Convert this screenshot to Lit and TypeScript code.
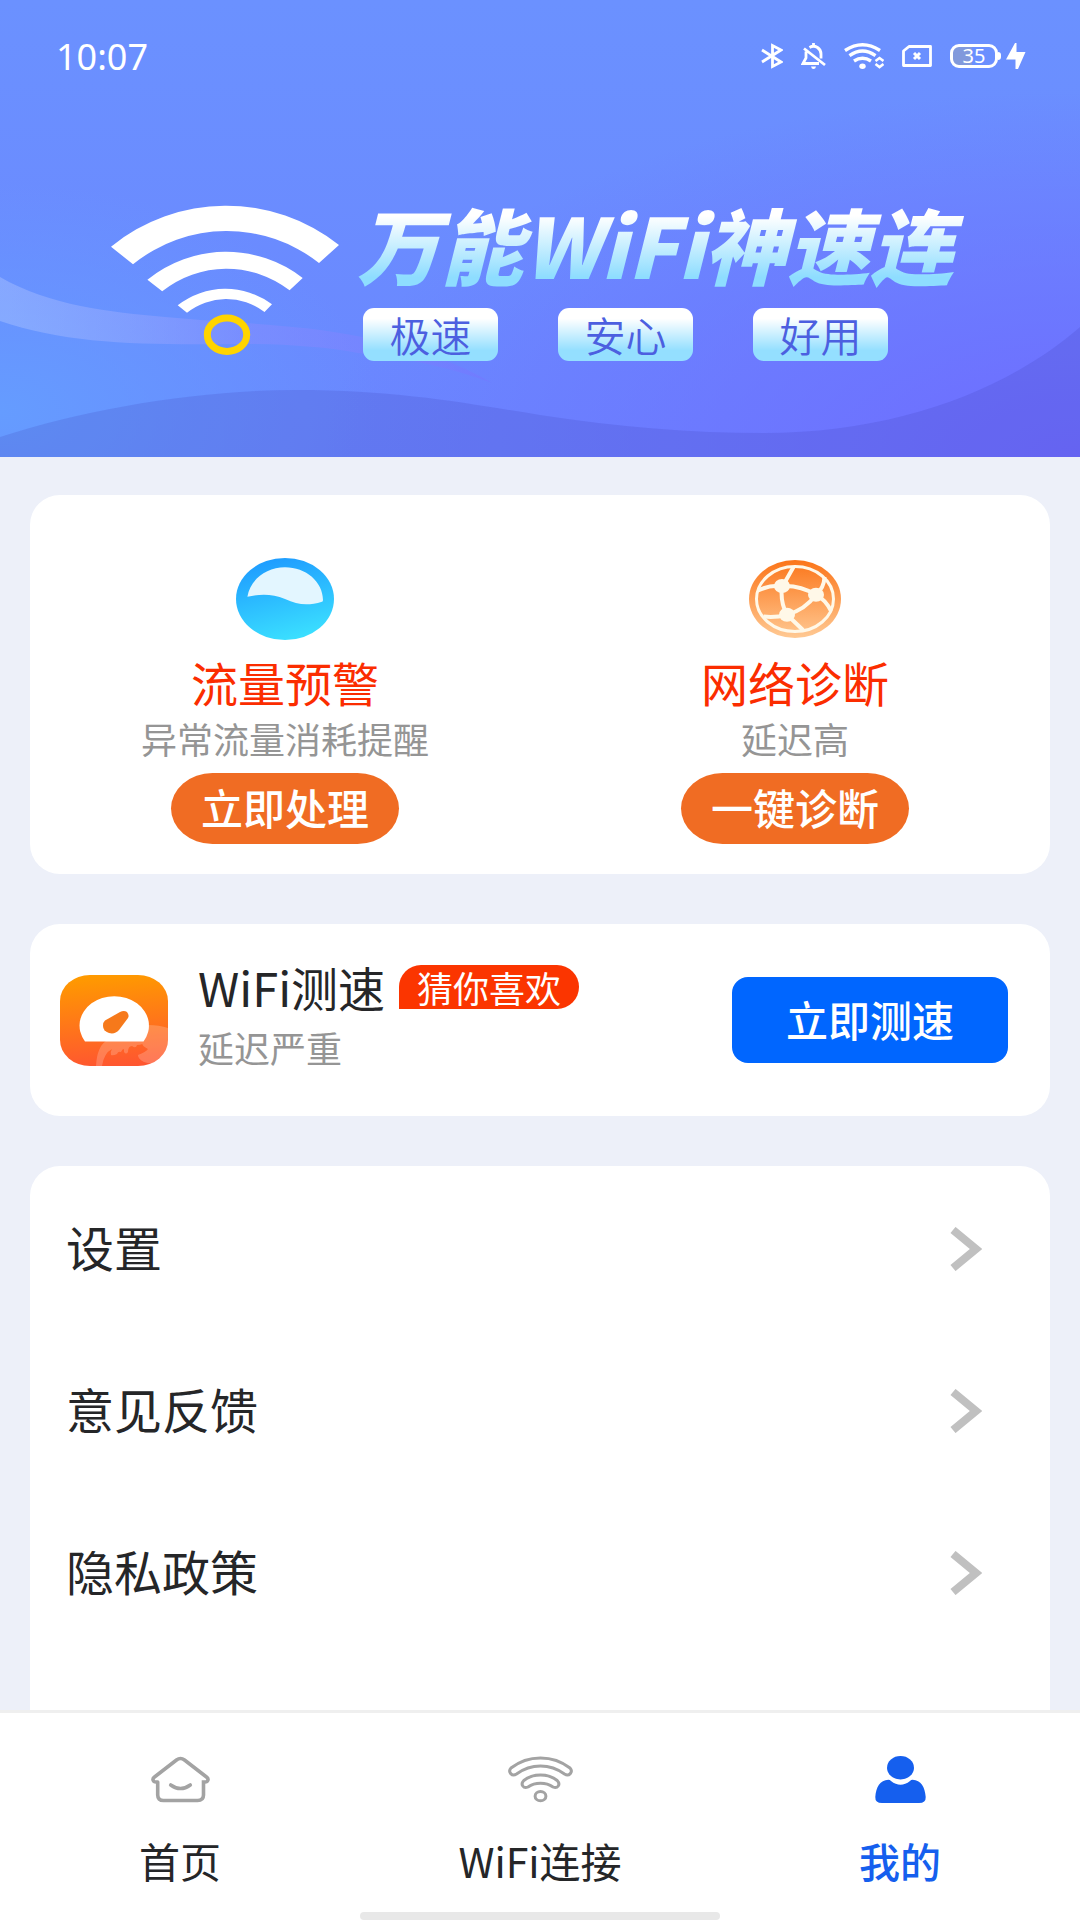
import { LitElement, html, css, TemplateResult } from "lit";
import { customElement, property, state } from "lit/decorators.js";
import { classMap } from "lit/directives/class-map.js";

interface Tool {
    icon: TemplateResult;
    title: string;
    note: string;
    action: string;
}

interface Tab {
    id: string;
    label: string;
    icon: TemplateResult;
}

const waterIcon = html`
    <svg width="98" height="82" viewBox="0 0 98 82" aria-hidden="true">
        <defs>
            <linearGradient id="water" x1="0.3" y1="0" x2="0.6" y2="1">
                <stop offset="0" stop-color="#1e9bff" />
                <stop offset="1" stop-color="#3be0ff" />
            </linearGradient>
        </defs>
        <ellipse cx="49" cy="41" rx="49" ry="41" fill="url(#water)" />
        <path fill="#e3f6ff" d="M11.4 38.7C14 22 30 9.3 49 9.3C70 9.3 87 24 87 42Q87 43.5 86 43.7C72 48 62 47 49 41C36 35.5 24 36 11.4 38.7Z" />
    </svg>
`;

const networkIcon = html`
    <svg width="92" height="78" viewBox="0 0 92 78" aria-hidden="true">
        <defs>
            <linearGradient id="net" x1="0" y1="0" x2="0" y2="1">
                <stop offset="0" stop-color="#fb7519" />
                <stop offset="1" stop-color="#ffc993" />
            </linearGradient>
        </defs>
        <ellipse cx="46" cy="39" rx="46" ry="39" fill="url(#net)" />
        <g fill="none" stroke="#fff8e8" stroke-width="3">
            <ellipse cx="46" cy="39" rx="38.5" ry="32.5" />
            <path stroke-width="4" d="M44.5 7L36 22M9 30.5Q20 25 33 26Q51 25 67 34.7M33 26Q31 42 38 54.7M14.5 56.5Q26 58 38 54.7Q56 50 67 34.7M38 54.7L54 70M67 34.7Q75 28 75.5 17M67 34.7Q77 40 82 51" />
        </g>
        <g fill="#fff8e8">
            <ellipse cx="33" cy="26" rx="8" ry="7" />
            <ellipse cx="67" cy="34.7" rx="8" ry="7" />
            <ellipse cx="38" cy="54.7" rx="8" ry="7" />
        </g>
    </svg>
`;

const gaugeIcon = html`
    <svg width="108" height="91" viewBox="0 0 108 91" aria-hidden="true">
        <defs>
            <linearGradient id="gauge" x1="0.45" y1="0" x2="0.55" y2="1">
                <stop offset="0" stop-color="#ff9a00" />
                <stop offset="1" stop-color="#ff5630" />
            </linearGradient>
            <clipPath id="tile"><rect width="108" height="91" rx="30" ry="26" /></clipPath>
        </defs>
        <g clip-path="url(#tile)">
            <rect width="108" height="91" fill="url(#gauge)" />
            <g fill="#fff" opacity="0.2">
                <path d="M88 50Q99 50 108 53V82Q98 92 84 87Q78 84 78 80Q86 77 88 74Q80 70 83 66Z" />
                <path d="M36 91Q37 72 46 66H84Q84 70 77 70Q76 74 72 71Q68 71 68 77Q66 80 64 77V74Q62 74 61 77Q58 76 57 79Q53 81 51 80Q50 77 52 74Q44 78 42 91Z" />
            </g>
            <path fill="#fff" d="M25 66.5A34.7 29.5 0 1 1 83.5 66.5Z" />
            <path fill="#f6791b" d="M45 45.5L60 37Q64 35 67 37Q69.5 40 68 43L59 55Q55 59.5 49 58Q43 56 43 51Q43 47 45 45.5Z" />
        </g>
    </svg>
`;

const homeIcon = html`
    <svg width="59" height="46" viewBox="0 0 59 46" fill="none" stroke="#a3a3a3" stroke-width="3.6" stroke-linecap="round" aria-hidden="true">
        <path d="M6.7 25.5H5C2 25.5 0.8 22.5 3.5 20.5L25.5 3.5Q29.5 0.5 33.5 3.5L55.5 20.5C58.2 22.5 57 25.5 54 25.5H52.5V38.5Q52.5 44 46.5 44H12.5Q6.7 44 6.7 38.5V25.5" />
        <path d="M19.7 28.5Q29.5 35.5 39.3 28.5" />
    </svg>
`;

const wifiIcon = html`
    <svg width="65" height="46" viewBox="0 0 65 46" fill="none" stroke="#a3a3a3" stroke-width="3" aria-hidden="true">
        <path d="M3 11.5C20 -2 45 -2 62 11.5C65.5 15.5 61 20.5 56.5 17.5C42 6.8 23 6.8 8.5 17.5C4 20.5 -0.5 15.5 3 11.5Z" />
        <path d="M15.8 24C25 16.8 40 16.8 49.2 24C53 28 49.5 32.5 45 30.5C38 25.5 27 25.5 20 30.5C15.5 32.5 12 28 15.8 24Z" />
        <ellipse cx="32.5" cy="39.7" rx="5.4" ry="4.6" />
    </svg>
`;

const personIcon = html`
    <svg width="51" height="47" viewBox="0 0 51 47" fill="#155fee" aria-hidden="true">
        <ellipse cx="25.5" cy="11.7" rx="13.5" ry="11.7" />
        <path d="M13.4 23.7Q15 23.7 16 25Q25.5 32.5 35 25Q36 23.7 37.6 23.7C46 24 50 31 50.7 41Q51 47 44 47H7Q0 47 0.3 41C1 31 5 24 13.4 23.7Z" />
    </svg>
`;

@customElement("status-bar")
export class StatusBar extends LitElement {
    static styles = css`
        :host {
            display: flex;
            align-items: center;
            justify-content: space-between;
            height: 112px;
            padding: 0 54px 0 56px;
            color: #fff;
            font-family: "Noto Sans", sans-serif;
        }

        .time {
            font-size: 36px;
        }

        .icons {
            display: flex;
            align-items: center;
            gap: 18px;
        }

        .power {
            display: flex;
            align-items: center;
            gap: 8px;
        }

        .battery {
            position: relative;
            box-sizing: border-box;
            width: 48px;
            height: 24px;
            border: 3px solid #fff;
            border-radius: 9px;
            background: linear-gradient(90deg, #8199dc 45%, transparent 45%);
            font-size: 20px;
            line-height: 18px;
            text-align: center;
        }

        .battery::after {
            content: "";
            position: absolute;
            top: 5px;
            right: -6px;
            width: 3px;
            height: 8px;
            border-radius: 0 3px 3px 0;
            background: #fff;
        }
    `;

    render() {
        return html`
            <span class="time">10:07</span>
            <div class="icons">
                <svg width="22" height="26" viewBox="0 0 22 26" fill="none" stroke="#fff" stroke-width="2.8" aria-hidden="true">
                    <path d="M1 7L20 19L11.5 23.5V2.5L20 7L1 19" />
                </svg>
                <svg width="25" height="26" viewBox="0 0 25 26" fill="none" stroke="#fff" stroke-width="2.8" aria-hidden="true">
                    <path d="M8.5 4.5Q12.5 2 16.5 4.5Q20 7 20 11V15.5M5 8.5V15L2 20.5H18M3 5.5L24 22M12.5 0V3" />
                    <path stroke="none" fill="#fff" d="M10 23.5H15Q14.5 26 12.5 26Q10.5 26 10 23.5Z" />
                </svg>
                <svg width="40" height="26" viewBox="0 0 40 26" fill="none" stroke="#fff" stroke-width="3.4" aria-hidden="true">
                    <path d="M1 7.5Q18.5 -4 36 7.5M5.5 12.7Q18.5 3.5 31.5 12.7M10 18Q18.5 12.5 27 18" />
                    <ellipse cx="18.5" cy="23.3" rx="3.2" ry="2.7" fill="#fff" stroke="none" />
                    <path stroke-width="2.6" d="M31.5 18L35.5 15L39.5 18M31.5 21L35.5 24L39.5 21" />
                </svg>
                <svg width="30" height="22" viewBox="0 0 30 22" fill="none" stroke="#fff" stroke-width="2.8" aria-hidden="true">
                    <path d="M7 1.5H28.5V20.5H1.5V6Z" stroke-linejoin="round" />
                    <path d="M12 8L18 14M18 8L12 14" stroke-width="3" />
                </svg>
                <div class="power">
                    <span class="battery">35</span>
                    <svg width="20" height="26" viewBox="0 0 20 26" fill="#fff" aria-hidden="true">
                        <path d="M9 0H10.5V9H19.5L12 26H9.5V16.5H0Z" />
                    </svg>
                </div>
            </div>
        `;
    }
}

@customElement("brand-header")
export class BrandHeader extends LitElement {
    @property({ attribute: false }) tags: string[] = [];

    static styles = css`
        :host {
            display: block;
            position: relative;
            background:
                radial-gradient(ellipse 35% 50% at 0 90%, #659cff, transparent),
                radial-gradient(ellipse 70% 80% at 100% 100%, #6e6cff, transparent),
                linear-gradient(#6b91ff, #6a86ff);
        }

        .waves {
            position: absolute;
            inset: 0;
            width: 100%;
            height: 100%;
        }

        .content {
            position: relative;
        }

        .brand {
            display: flex;
            align-items: center;
            gap: 24px;
            padding: 86px 80px 96px 111px;
        }

        .logo {
            flex: none;
        }

        .name {
            margin: 0 0 20px -6px;
            padding-right: 24px;
            font-size: 83px;
            font-weight: 900;
            font-style: italic;
            line-height: 90px;
            white-space: nowrap;
            color: transparent;
            background: linear-gradient(#fff 20%, #8eddff 88%);
            -webkit-background-clip: text;
            background-clip: text;
        }

        .tags {
            display: flex;
            gap: 60px;
            margin: 0;
            padding: 0;
            list-style: none;
        }

        .tag {
            width: 135px;
            border-radius: 11px;
            background: linear-gradient(#fff 20%, #94dfff 80%);
            color: #4c5fe0;
            font-size: 41px;
            font-weight: 350;
            line-height: 53px;
            text-align: center;
        }
    `;

    render() {
        return html`
            <svg class="waves" viewBox="0 0 1080 457" preserveAspectRatio="none" aria-hidden="true">
                <defs>
                    <linearGradient id="ribbon" x1="0" y1="0" x2="1" y2="0">
                        <stop offset="0" stop-color="#fff" stop-opacity="0.2" />
                        <stop offset="0.5" stop-color="#a78cff" stop-opacity="0.25" />
                        <stop offset="1" stop-color="#7a6cff" stop-opacity="0.3" />
                    </linearGradient>
                </defs>
                <path fill="url(#ribbon)" d="M0 277C50 306 110 312 165 317C240 324 300 324 362 337Q440 352 492 383Q430 360 358 353Q310 344 240 344C150 345 70 345 0 321Z" />
                <path fill="#3f3fb0" fill-opacity="0.18" d="M0 437C90 408 200 390 296 390C400 390 470 404 540 415C620 427 690 433 764 433C900 433 1010 388 1080 327V457H0Z" />
            </svg>
            <div class="content">
                <status-bar></status-bar>
                <div class="brand">
                    <svg class="logo" width="228" height="150" viewBox="0 0 228 150" fill="#fff" aria-hidden="true">
                        <path d="M0 41.7A182 182 0 0 1 228 40L208 58A149 149 0 0 0 22 59.3Z" />
                        <path d="M36.4 74.7A125 125 0 0 1 191.7 73L178.6 85.3A103 103 0 0 0 51.2 86.3Z" />
                        <path d="M66.7 100.3A77.5 77.5 0 0 1 161 99.3L153.5 107A63 63 0 0 0 76 107.7Z" />
                        <ellipse cx="116" cy="129.7" rx="19.7" ry="16.7" fill="none" stroke="#ffd400" stroke-width="7" />
                    </svg>
                    <div>
                        <h1 class="name">万能WiFi神速连</h1>
                        <ul class="tags">
                            ${this.tags.map((tag) => html`<li class="tag">${tag}</li>`)}
                        </ul>
                    </div>
                </div>
            </div>
        `;
    }
}

@customElement("tool-item")
export class ToolItem extends LitElement {
    @property({ attribute: false }) tool!: Tool;

    static styles = css`
        :host {
            display: flex;
            flex-direction: column;
            align-items: center;
        }

        .icon {
            display: flex;
            align-items: center;
            height: 82px;
            margin-bottom: 13px;
        }

        .title {
            margin: 0;
            color: #fb2d00;
            font-size: 47px;
            font-weight: 400;
            line-height: 58px;
        }

        .note {
            margin: 3px 0 11px;
            color: #959595;
            font-size: 36px;
            line-height: 48px;
        }

        .action {
            width: 228px;
            height: 71px;
            padding: 0 0 3px;
            border: 0;
            border-radius: 42px / 36px;
            background: #f06c23;
            color: #fff;
            font: inherit;
            font-size: 42px;
            font-weight: 500;
            line-height: 68px;
            white-space: nowrap;
        }
    `;

    render() {
        return html`
            <div class="icon">${this.tool.icon}</div>
            <h2 class="title">${this.tool.title}</h2>
            <p class="note">${this.tool.note}</p>
            <button class="action" type="button">${this.tool.action}</button>
        `;
    }
}

@customElement("tab-bar")
export class TabBar extends LitElement {
    @property({ attribute: false }) tabs: Tab[] = [];
    @state() private current = "mine";

    static styles = css`
        :host {
            display: block;
            border-top: 3px solid #efefef;
            background: #fff;
        }

        .tabs {
            display: grid;
            grid-template-columns: repeat(3, 1fr);
        }

        .tab {
            display: flex;
            flex-direction: column;
            align-items: center;
            gap: 27px;
            padding: 43px 0 22px;
            border: 0;
            background: none;
            color: #252628;
            font: inherit;
            font-size: 41px;
            line-height: 60px;
        }

        .tab svg {
            display: block;
            height: 47px;
        }

        .tab.active {
            color: #155fee;
            font-weight: 500;
        }

        .handle {
            width: 33.333%;
            height: 8px;
            margin: 0 auto;
            border-radius: 4px;
            background: #e8e8e8;
        }
    `;

    render() {
        return html`
            <nav class="tabs">
                ${this.tabs.map(
                    (tab) => html`
                        <button
                            type="button"
                            class=${classMap({ tab: true, active: tab.id === this.current })}
                            @click=${() => (this.current = tab.id)}
                        >
                            ${tab.icon}
                            <span>${tab.label}</span>
                        </button>
                    `
                )}
            </nav>
            <div class="handle"></div>
        `;
    }
}

@customElement("app-root")
export class AppRoot extends LitElement {
    private tags = ["极速", "安心", "好用"];

    private tools: Tool[] = [
        { icon: waterIcon, title: "流量预警", note: "异常流量消耗提醒", action: "立即处理" },
        { icon: networkIcon, title: "网络诊断", note: "延迟高", action: "一键诊断" },
    ];

    private links = ["设置", "意见反馈", "隐私政策"];

    private tabs: Tab[] = [
        { id: "home", label: "首页", icon: homeIcon },
        { id: "wifi", label: "WiFi连接", icon: wifiIcon },
        { id: "mine", label: "我的", icon: personIcon },
    ];

    static styles = css`
        :host {
            display: flex;
            flex-direction: column;
            height: 100vh;
            background: #edf0f9;
            color: #252628;
            font-family: "Noto Sans CJK SC", "Noto Sans", sans-serif;
        }

        brand-header,
        tab-bar {
            flex: none;
        }

        .main {
            display: flex;
            flex: 1;
            flex-direction: column;
            gap: 50px;
            min-height: 0;
            padding: 38px 30px 0;
            overflow: hidden;
        }

        .card {
            border-radius: 30px;
            background: #fff;
        }

        .tools {
            display: grid;
            grid-template-columns: 1fr 1fr;
            padding: 63px 0 30px;
        }

        .speed {
            display: flex;
            align-items: center;
            gap: 30px;
            padding: 41px 42px 41px 30px;
        }

        .speed-info {
            flex: 1;
        }

        .speed-head {
            display: flex;
            align-items: center;
            gap: 14px;
        }

        .speed-title {
            margin: 0;
            font-size: 47px;
            font-weight: 400;
            line-height: 44px;
        }

        .badge {
            padding: 0 18px;
            border-radius: 25px 25px 25px 0;
            background: #fb3500;
            color: #fff;
            font-size: 36px;
            line-height: 44px;
        }

        .speed-note {
            margin: 10px 0 0;
            color: #959595;
            font-size: 36px;
            line-height: 56px;
        }

        .speed-action {
            width: 276px;
            height: 86px;
            padding: 0 0 3px;
            border: 0;
            border-radius: 16px;
            background: #0066ff;
            color: #fff;
            font: inherit;
            font-size: 42px;
            font-weight: 500;
        }

        .links {
            flex: 1;
            padding-top: 2px;
            border-radius: 30px 30px 0 0;
        }

        .link {
            display: flex;
            align-items: center;
            justify-content: space-between;
            height: 162px;
            padding: 0 68px 0 36px;
            color: inherit;
            font-size: 48px;
            text-decoration: none;
        }

        .link-text {
            padding-bottom: 7px;
        }
    `;

    render() {
        return html`
            <brand-header .tags=${this.tags}></brand-header>
            <main class="main">
                <section class="card tools">
                    ${this.tools.map((tool) => html`<tool-item .tool=${tool}></tool-item>`)}
                </section>
                <section class="card speed">
                    ${gaugeIcon}
                    <div class="speed-info">
                        <div class="speed-head">
                            <h2 class="speed-title">WiFi测速</h2>
                            <span class="badge">猜你喜欢</span>
                        </div>
                        <p class="speed-note">延迟严重</p>
                    </div>
                    <button class="speed-action" type="button">立即测速</button>
                </section>
                <section class="card links">
                    ${this.links.map(
                        (link) => html`
                            <a class="link" href="#">
                                <span class="link-text">${link}</span>
                                <svg width="32" height="44" viewBox="0 0 32 44" fill="none" stroke="#c0c0c0" stroke-width="8" aria-hidden="true">
                                    <path d="M3 3L26 22L3 41" />
                                </svg>
                            </a>
                        `
                    )}
                </section>
            </main>
            <tab-bar .tabs=${this.tabs}></tab-bar>
        `;
    }
}
